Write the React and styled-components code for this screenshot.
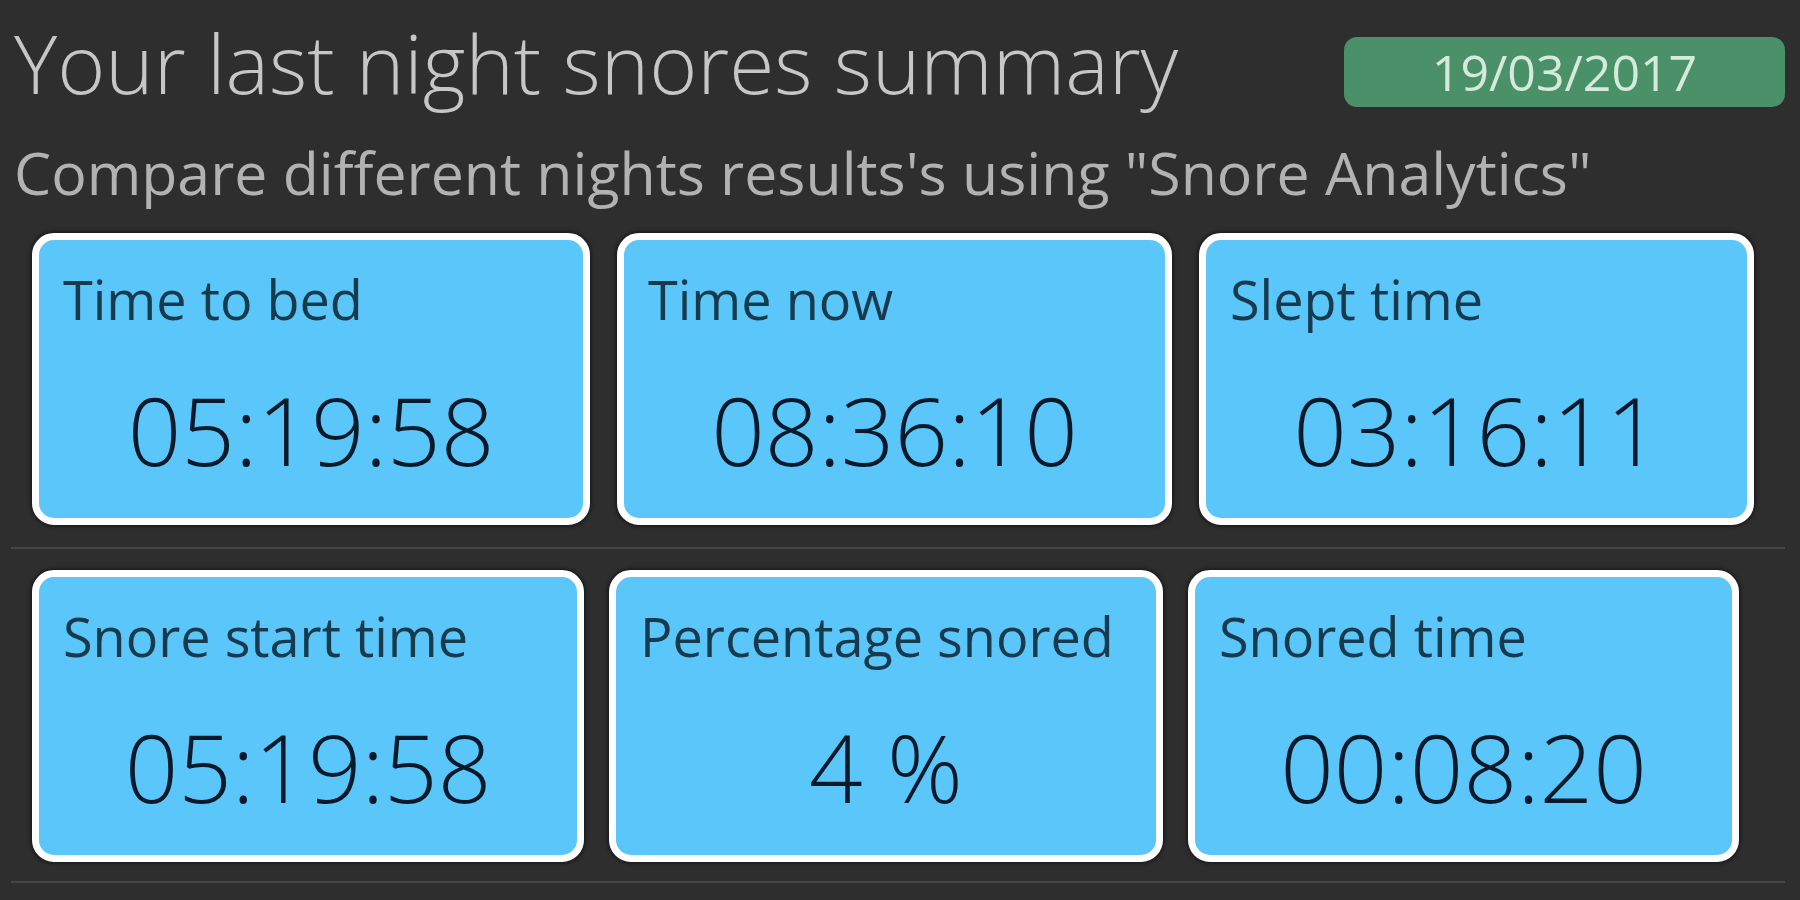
import React from "react";
import styled, { createGlobalStyle } from "styled-components";

const Global = createGlobalStyle`
  html, body { margin: 0; padding: 0; background: #2e2e2e; }
  body { font-family: "Open Sans", "Noto Sans", sans-serif; }
`;

const Page = styled.div`
  width: 1800px;
  height: 900px;
  box-sizing: border-box;
  padding: 12px 15px 0 11px;
  overflow: hidden;
`;

const Header = styled.div`
  display: flex;
  justify-content: space-between;
  align-items: flex-start;
`;

const Title = styled.h1`
  margin: 0 0 0 3px;
  font-weight: 300;
  font-size: 82px;
  line-height: 100px;
  color: #c6c6c6;
  letter-spacing: 0;
`;

const DateBadge = styled.div`
  margin-top: 25px;
  width: 441px;
  height: 70px;
  border-radius: 13px;
  background: #4a9068;
  color: #d6eadc;
  font-size: 50px;
  font-weight: 400;
  display: flex;
  align-items: center;
  justify-content: center;
`;

const Subtitle = styled.p`
  margin: 18px 0 0 3px;
  font-size: 59px;
  font-weight: 400;
  line-height: 84px;
  color: #b2b2b2;
  white-space: nowrap;
`;

const Row = styled.div`
  display: flex;
  gap: ${(p) => p.$gap}px;
  padding: 0 0 ${(p) => p.$bottom}px 21px;
  margin-top: ${(p) => p.$top}px;
  border-bottom: 2px solid #464646;
`;

const Card = styled.div`
  width: ${(p) => p.$w}px;
  height: 292px;
  box-sizing: border-box;
  background: #5bc6fa;
  border: 7px solid #ffffff;
  border-radius: 22px;
  box-shadow: 0 0 4px 1px rgba(0, 0, 0, 0.6);
  padding: 29px 20px 0 24px;
  display: flex;
  flex-direction: column;
`;

const Label = styled.div`
  font-size: 54px;
  font-weight: 400;
  line-height: 60px;
  color: #173b4d;
  white-space: nowrap;
`;

const Value = styled.div`
  margin-top: 46px;
  font-size: 94px;
  font-weight: 300;
  line-height: 110px;
  color: #08192a;
  text-align: center;
  padding-right: 4px;
`;

const rows = [
  {
    top: 19,
    gap: 27,
    bottom: 22,
    cards: [
      { label: "Time to bed", value: "05:19:58", w: 558 },
      { label: "Time now", value: "08:36:10", w: 555 },
      { label: "Slept time", value: "03:16:11", w: 555 },
    ],
  },
  {
    top: 21,
    gap: 25,
    bottom: 19,
    cards: [
      { label: "Snore start time", value: "05:19:58", w: 552 },
      { label: "Percentage snored", value: "4 %", w: 554 },
      { label: "Snored time", value: "00:08:20", w: 551 },
    ],
  },
];

export default function App() {
  return (
    <>
      <Global />
      <Page>
        <Header>
          <Title>Your last night snores summary</Title>
          <DateBadge>19/03/2017</DateBadge>
        </Header>
        <Subtitle>Compare different nights results's using "Snore Analytics"</Subtitle>
        {rows.map((r, i) => (
          <Row key={i} $top={r.top} $gap={r.gap} $bottom={r.bottom}>
            {r.cards.map((c) => (
              <Card key={c.label} $w={c.w}>
                <Label>{c.label}</Label>
                <Value>{c.value}</Value>
              </Card>
            ))}
          </Row>
        ))}
      </Page>
    </>
  );
}
